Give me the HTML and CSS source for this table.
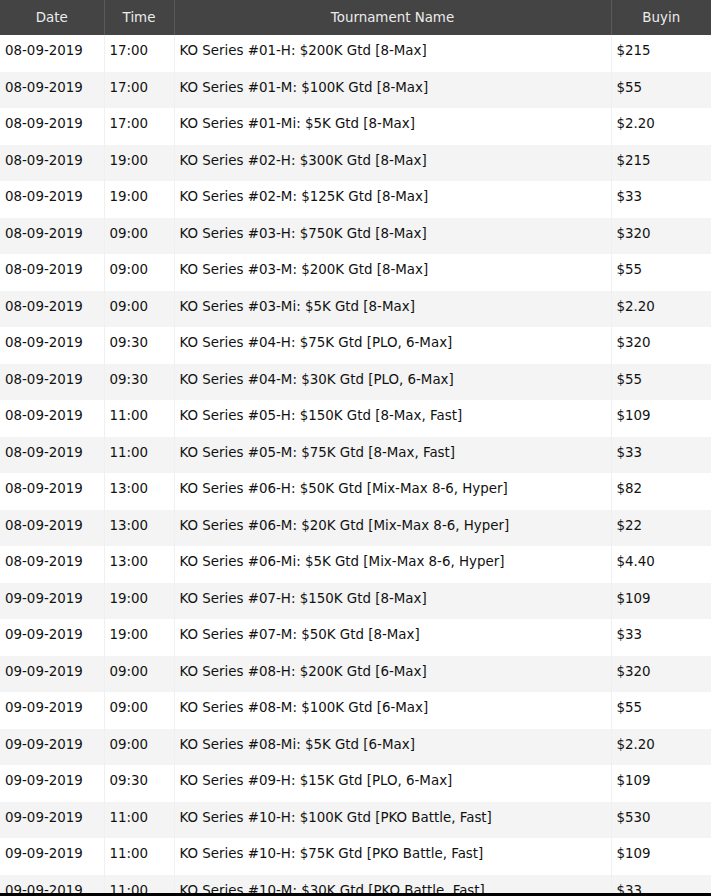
FILE: index.html
```html
<!DOCTYPE html>
<html lang="en">
<head>
    <meta charset="UTF-8">
    <meta name="viewport" content="width=device-width, initial-scale=1.0">
    <title>KO Series Schedule</title>
    <link rel="stylesheet" href="styles.css">
</head>
<body>

    <table class="schedule">
        <colgroup>
            <col class="col-date">
            <col class="col-time">
            <col class="col-name">
            <col class="col-buyin">
        </colgroup>
        <thead>
            <tr>
                <th>Date</th>
                <th>Time</th>
                <th>Tournament Name</th>
                <th>Buyin</th>
            </tr>
        </thead>
        <tbody>
            <tr><td>08-09-2019</td><td>17:00</td><td>KO Series #01-H: $200K Gtd [8-Max]</td><td>$215</td></tr>
            <tr><td>08-09-2019</td><td>17:00</td><td>KO Series #01-M: $100K Gtd [8-Max]</td><td>$55</td></tr>
            <tr><td>08-09-2019</td><td>17:00</td><td>KO Series #01-Mi: $5K Gtd [8-Max]</td><td>$2.20</td></tr>
            <tr><td>08-09-2019</td><td>19:00</td><td>KO Series #02-H: $300K Gtd [8-Max]</td><td>$215</td></tr>
            <tr><td>08-09-2019</td><td>19:00</td><td>KO Series #02-M: $125K Gtd [8-Max]</td><td>$33</td></tr>
            <tr><td>08-09-2019</td><td>09:00</td><td>KO Series #03-H: $750K Gtd [8-Max]</td><td>$320</td></tr>
            <tr><td>08-09-2019</td><td>09:00</td><td>KO Series #03-M: $200K Gtd [8-Max]</td><td>$55</td></tr>
            <tr><td>08-09-2019</td><td>09:00</td><td>KO Series #03-Mi: $5K Gtd [8-Max]</td><td>$2.20</td></tr>
            <tr><td>08-09-2019</td><td>09:30</td><td>KO Series #04-H: $75K Gtd [PLO, 6-Max]</td><td>$320</td></tr>
            <tr><td>08-09-2019</td><td>09:30</td><td>KO Series #04-M: $30K Gtd [PLO, 6-Max]</td><td>$55</td></tr>
            <tr><td>08-09-2019</td><td>11:00</td><td>KO Series #05-H: $150K Gtd [8-Max, Fast]</td><td>$109</td></tr>
            <tr><td>08-09-2019</td><td>11:00</td><td>KO Series #05-M: $75K Gtd [8-Max, Fast]</td><td>$33</td></tr>
            <tr><td>08-09-2019</td><td>13:00</td><td>KO Series #06-H: $50K Gtd [Mix-Max 8-6, Hyper]</td><td>$82</td></tr>
            <tr><td>08-09-2019</td><td>13:00</td><td>KO Series #06-M: $20K Gtd [Mix-Max 8-6, Hyper]</td><td>$22</td></tr>
            <tr><td>08-09-2019</td><td>13:00</td><td>KO Series #06-Mi: $5K Gtd [Mix-Max 8-6, Hyper]</td><td>$4.40</td></tr>
            <tr><td>09-09-2019</td><td>19:00</td><td>KO Series #07-H: $150K Gtd [8-Max]</td><td>$109</td></tr>
            <tr><td>09-09-2019</td><td>19:00</td><td>KO Series #07-M: $50K Gtd [8-Max]</td><td>$33</td></tr>
            <tr><td>09-09-2019</td><td>09:00</td><td>KO Series #08-H: $200K Gtd [6-Max]</td><td>$320</td></tr>
            <tr><td>09-09-2019</td><td>09:00</td><td>KO Series #08-M: $100K Gtd [6-Max]</td><td>$55</td></tr>
            <tr><td>09-09-2019</td><td>09:00</td><td>KO Series #08-Mi: $5K Gtd [6-Max]</td><td>$2.20</td></tr>
            <tr><td>09-09-2019</td><td>09:30</td><td>KO Series #09-H: $15K Gtd [PLO, 6-Max]</td><td>$109</td></tr>
            <tr><td>09-09-2019</td><td>11:00</td><td>KO Series #10-H: $100K Gtd [PKO Battle, Fast]</td><td>$530</td></tr>
            <tr><td>09-09-2019</td><td>11:00</td><td>KO Series #10-H: $75K Gtd [PKO Battle, Fast]</td><td>$109</td></tr>
            <tr><td>09-09-2019</td><td>11:00</td><td>KO Series #10-M: $30K Gtd [PKO Battle, Fast]</td><td>$33</td></tr>
            <tr><td>09-09-2019</td><td>13:00</td><td>KO Series #11-H: $50K Gtd [8-Max]</td><td>$82</td></tr>
            <tr><td>09-09-2019</td><td>13:00</td><td>KO Series #11-M: $20K Gtd [8-Max]</td><td>$22</td></tr>
        </tbody>
    </table>

    <div class="screen-edge"></div>

</body>
</html>
```

FILE: styles.css
```css
body {
    margin: 0;
    font-family: "DejaVu Sans", Verdana, sans-serif;
    background: white;
    color: #111;
}
.schedule {
    width: 711px;
    border-collapse: collapse;
    table-layout: fixed;
    font-size: 13.4px;
}
.col-date { width: 104px; }
.col-time { width: 70px; }
.col-name { width: 437px; }
.col-buyin { width: 100px; }
th, td {
    padding: 0 5px;
    text-align: left;
    white-space: nowrap;
    overflow: hidden;
}
th {
    background: #444444;
    color: #ececec;
    font-weight: normal;
    text-align: center;
    height: 35px;
    border-left: 1px solid #5a5a5a;
}
td {
    box-sizing: border-box;
    height: 36.5px;
    padding-top: 8px;
    line-height: 16px;
    vertical-align: top;
    border-left: 1px solid #f0f0f0;
}
th:first-child, td:first-child {
    border-left: none;
}
tbody tr:nth-child(even) {
    background: #f3f4f3;
}
.screen-edge {
    position: fixed;
    left: 0;
    right: 0;
    bottom: 0;
    height: 3px;
    background: #000;
}
```
